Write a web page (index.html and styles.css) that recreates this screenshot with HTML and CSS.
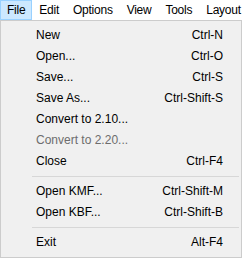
FILE: index.html
```html
<!DOCTYPE html>
<html>
<head>
<meta charset="utf-8">
<link rel="stylesheet" href="styles.css">
</head>
<body>
<div class="app">
  <div class="menubar">
    <span class="top active">File</span>
    <span class="top">Edit</span>
    <span class="top">Options</span>
    <span class="top">View</span>
    <span class="top">Tools</span>
    <span class="top">Layout</span>
  </div>
  <div class="dropdown">
    <div class="item"><span>New</span><span class="key">Ctrl-N</span></div>
    <div class="item"><span>Open...</span><span class="key">Ctrl-O</span></div>
    <div class="item"><span>Save...</span><span class="key">Ctrl-S</span></div>
    <div class="item"><span>Save As...</span><span class="key">Ctrl-Shift-S</span></div>
    <div class="item"><span>Convert to 2.10...</span><span class="key"></span></div>
    <div class="item disabled"><span>Convert to 2.20...</span><span class="key"></span></div>
    <div class="item"><span>Close</span><span class="key">Ctrl-F4</span></div>
    <div class="sep"></div>
    <div class="item"><span>Open KMF...</span><span class="key">Ctrl-Shift-M</span></div>
    <div class="item"><span>Open KBF...</span><span class="key">Ctrl-Shift-B</span></div>
    <div class="sep"></div>
    <div class="item"><span>Exit</span><span class="key">Alt-F4</span></div>
  </div>
</div>
</body>
</html>
```
FILE: styles.css
```css
html, body {
  margin: 0;
  padding: 0;
  background: #ffffff;
}
body {
  font-family: "Liberation Sans", Arial, sans-serif;
  font-size: 12px;
  color: #000000;
}
.app {
  position: relative;
  width: 243px;
  height: 261px;
  overflow: hidden;
}
.menubar {
  display: flex;
  height: 20px;
  white-space: nowrap;
}
.top {
  box-sizing: border-box;
  height: 20px;
  line-height: 18px;
  padding: 0 6px;
  border: 1px solid transparent;
  letter-spacing: -0.25px;
}
.top.active {
  background: #cce8ff;
  border-color: #99d1ff;
}
.dropdown {
  position: absolute;
  left: 0;
  top: 20px;
  width: 242px;
  box-sizing: border-box;
  background: #f0f0f0;
  border: 1px solid #cccccc;
  padding: 4px 0 4px;
}
.item {
  display: grid;
  grid-template-columns: 1fr auto;
  height: 21px;
  line-height: 21px;
  padding: 0 18px 0 35px;
  white-space: nowrap;
}
.item.disabled {
  color: #6d6d6d;
}
.sep {
  height: 1px;
  background: #d7d7d7;
  margin: 4px 2px 4px 31px;
}
```
